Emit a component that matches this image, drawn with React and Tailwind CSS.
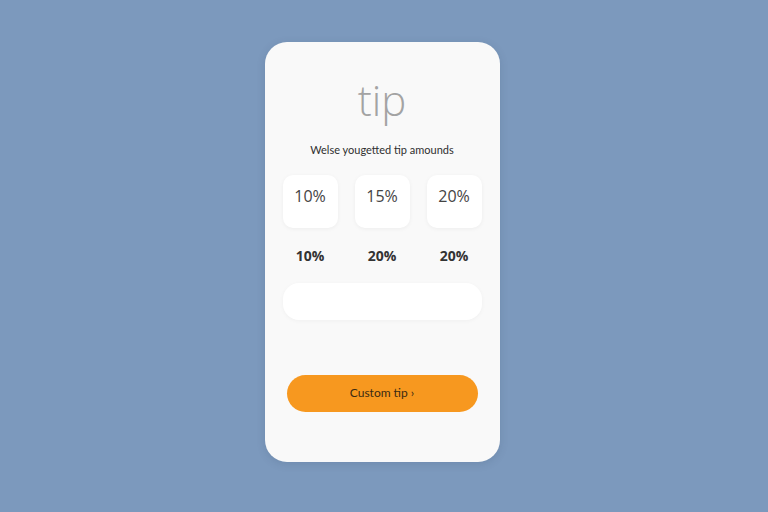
const presets = ["10%", "15%", "20%"];
const amounts = ["10%", "20%", "20%"];

const App = () => {
  return (
    <div
      className="min-h-screen w-full bg-[#7c99bd] flex justify-center pt-[42px]"
      style={{ fontFamily: "Lato, 'Open Sans', sans-serif" }}
    >
      <div className="w-[235px] h-[420px] mr-[4px] bg-[#f9f9f9] rounded-[22px] shadow-[0_2px_8px_rgba(40,60,90,0.15)] flex flex-col px-[18px]">
        <h1 className="mt-[34px] text-center text-[42px] leading-[48px] font-light text-[#a3a3a3] font-['Open_Sans']">
          tip
        </h1>

        <p className="mt-[18px] text-center text-[11px] text-[#2f2f2f]">
          Welse yougetted tip amounds
        </p>

        <div className="mt-[16px] grid grid-cols-3 gap-[17px]">
          {presets.map((p, i) => (
            <button
              key={i}
              className="h-[53px] bg-white rounded-[10px] shadow-[0_1px_4px_rgba(0,0,0,0.05)] flex justify-center pt-[9px] text-[16px] text-[#444] font-['Open_Sans']"
            >
              {p}
            </button>
          ))}
        </div>

        <div className="mt-[17px] grid grid-cols-3 gap-[17px]">
          {amounts.map((a, i) => (
            <span
              key={i}
              className="text-center text-[14px] font-bold text-[#333] font-['Open_Sans']"
            >
              {a}
            </span>
          ))}
        </div>

        <div className="mt-[17px] h-[37px] bg-white rounded-[16px] shadow-[0_1px_4px_rgba(0,0,0,0.04)]" />

        <button className="mt-[55px] mx-[4px] h-[37px] rounded-full bg-[#f7981f] text-[12px] text-[#3b2a12]">
          Custom tip ›
        </button>
      </div>
    </div>
  );
};

export default App;
